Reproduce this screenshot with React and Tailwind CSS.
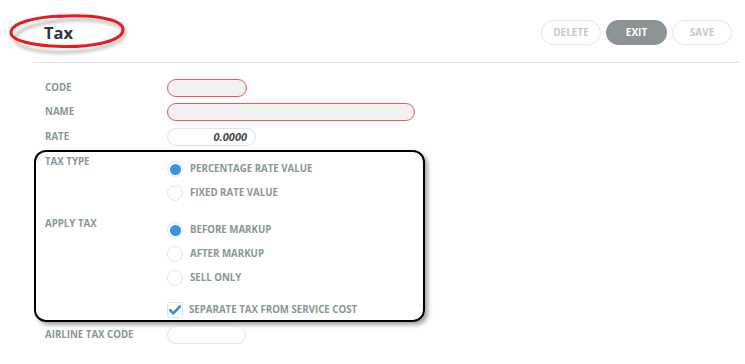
import React from 'react';

const labelCls = "w-[122px] shrink-0 text-[9.7px] font-bold uppercase leading-[12px] text-[#8a9598]";
const optionText = "text-[9.7px] font-bold uppercase text-[#8a9598]";

const Radio = ({ checked, label }) => (
  <div className="flex h-[24px] items-center">
    <span className="flex h-[16px] w-[16px] items-center justify-center rounded-full border border-[#e4e6e6] bg-white">
      {checked && <span className="h-[11px] w-[11px] rounded-full bg-[#3a93df]" />}
    </span>
    <span className={`ml-[7px] ${optionText}`}>{label}</span>
  </div>
);

const Row = ({ label, children, className = '' }) => (
  <div className={`flex h-[18px] items-center pl-[45px] ${className}`}>
    <div className={labelCls}>{label}</div>
    {children}
  </div>
);

export default function App() {
  return (
    <div className="relative h-[364px] w-[745px] overflow-hidden bg-white font-['Open_Sans',sans-serif]">
      {/* header */}
      <div className="flex items-start justify-between pt-[20px] pr-[13px]">
        <h1 className="ml-[44px] mt-[2px] text-[16.5px] font-bold leading-[22px] text-[#2e3440]">Tax</h1>
        <div className="flex gap-[5px]">
          <button className="h-[25px] w-[60px] rounded-full border-[1.5px] border-[#e1e7e7] text-[10px] font-bold text-[#c3cbcb]">DELETE</button>
          <button className="h-[25px] w-[61px] rounded-full bg-[#8b9396] text-[10px] font-bold text-white">EXIT</button>
          <button className="h-[25px] w-[60px] rounded-full border-[1.5px] border-[#e1e7e7] text-[10px] font-bold text-[#c3cbcb]">SAVE</button>
        </div>
      </div>
      <div className="ml-[33px] mr-[5px] mt-[17px] h-px bg-[#e2e0f0]" />

      {/* form */}
      <Row label="Code" className="mt-[16px]">
        <div className="h-[18px] w-[80px] rounded-full border-[1.5px] border-[#f0595b] bg-[#f1f1f1]" />
      </Row>
      <Row label="Name" className="mt-[6px]">
        <div className="h-[18px] w-[248px] rounded-full border-[1.5px] border-[#f0595b] bg-[#f1f1f1]" />
      </Row>
      <Row label="Rate" className="mt-[7px]">
        <div className="flex h-[18px] w-[89px] items-center justify-end rounded-full border border-[#e2e4e4] bg-white pr-[8px] text-[11px] font-bold italic text-[#464b50]">
          0.0000
        </div>
      </Row>

      <div className="ml-[34px] mt-[4px] h-[172px] w-[391px] rounded-[12px] border-2 border-black pl-[9px] pt-[4px] shadow-[3px_3px_4px_rgba(0,0,0,0.35)]">
        <div className="flex">
          <div className={labelCls}>Tax Type</div>
          <div className="mt-[1px] flex flex-col">
            <Radio checked label="Percentage Rate Value" />
            <Radio label="Fixed Rate Value" />
          </div>
        </div>
        <div className="mt-[13px] flex">
          <div className={labelCls}>Apply Tax</div>
          <div className="flex flex-col">
            <Radio checked label="Before Markup" />
            <Radio label="After Markup" />
            <Radio label="Sell Only" />
          </div>
        </div>
        <div className="ml-[122px] mt-[8px] flex h-[24px] items-center">
          <span className="flex h-[16px] w-[16px] items-center justify-center rounded-[2px] border border-[#e2e4e4] bg-white">
            <svg width="12" height="10" viewBox="0 0 12 10">
              <path d="M1 5.2 L4.2 8.4 L11 1.4" fill="none" stroke="#2f8fdd" strokeWidth="2.6" strokeLinecap="round" strokeLinejoin="round" />
            </svg>
          </span>
          <span className={`ml-[6px] ${optionText}`}>Separate Tax From Service Cost</span>
        </div>
      </div>

      <Row label="Airline Tax Code" className="mt-[4px]">
        <div className="h-[18px] w-[79px] rounded-full border border-[#e2e4e4] bg-white" />
      </Row>

      {/* red annotation ellipse */}
      <svg className="pointer-events-none absolute left-0 top-0" width="140" height="64" viewBox="0 0 140 64">
        <defs>
          <filter id="blur" x="-20%" y="-50%" width="140%" height="200%">
            <feGaussianBlur stdDeviation="1.8" />
          </filter>
        </defs>
        <ellipse cx="70" cy="36" rx="55" ry="16" fill="none" stroke="#9a9a9a" strokeWidth="3.5" opacity="0.55" filter="url(#blur)" transform="rotate(-3 70 36)" />
        <path
          d="M58 16.5 C 92 14, 124 19, 123 30 C 122 42, 90 47, 62 46.5 C 31 46, 10 40, 11 32 C 12 23, 34 17, 62 16"
          fill="none"
          stroke="#e41e1e"
          strokeWidth="3"
          strokeLinecap="round"
        />
      </svg>
    </div>
  );
}
